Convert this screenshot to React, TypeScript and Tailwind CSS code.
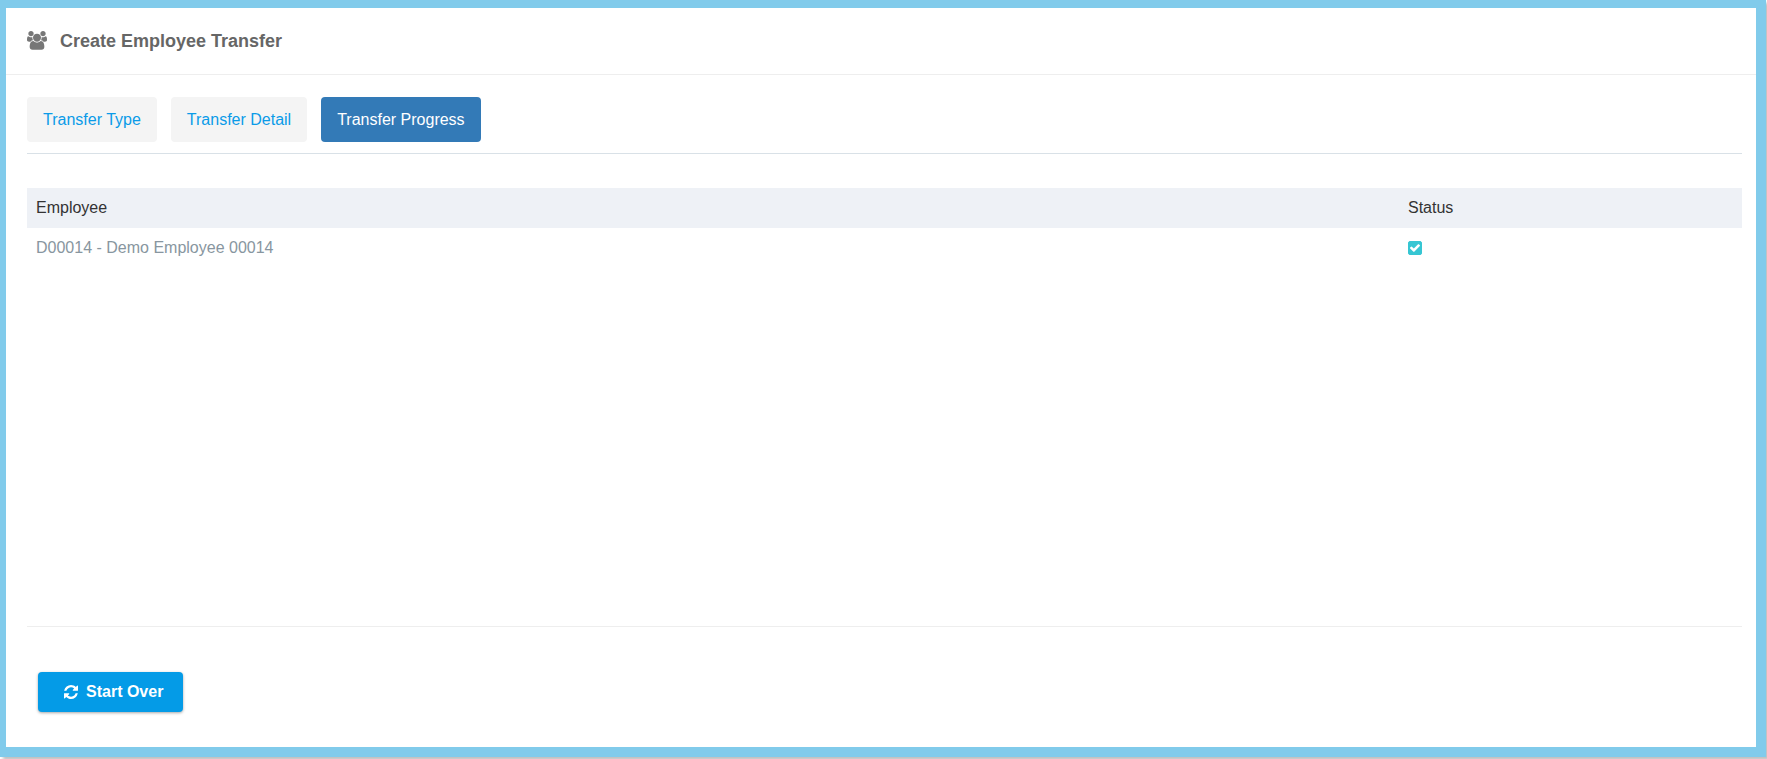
import { useState } from "react";
import clsx from "clsx";

interface Employee {
  id: string;
  name: string;
  done: boolean;
}

const steps = ["Transfer Type", "Transfer Detail", "Transfer Progress"];

const employees: Employee[] = [
  { id: "D00014", name: "Demo Employee 00014", done: true },
];

const UsersIcon = () => (
  <svg viewBox="0 0 1920 1920" className="w-5 h-5 fill-[#777777]" aria-hidden="true">
    <path d="M593 896q-162 5-265 128h-134q-82 0-138-40.5t-56-118.5q0-353 124-353 6 0 43.5 21t97.5 42.5 119 21.5q67 0 133-23-5 37-5 66 0 139 81 256zm1071 637q0 120-73 189.5t-194 69.5h-874q-121 0-194-69.5t-73-189.5q0-53 3.5-103.5t14-109 26.5-108.5 43-97.5 62-81 85.5-53.5 111.5-20q10 0 43 21.5t73 48 107 48 135 21.5 135-21.5 107-48 73-48 43-21.5q61 0 111.5 20t85.5 53.5 62 81 43 97.5 26.5 108.5 14 109 3.5 103.5zm-1024-1277q0 106-75 181t-181 75-181-75-75-181 75-181 181-75 181 75 75 181zm704 384q0 159-112.5 271.5t-271.5 112.5-271.5-112.5-112.5-271.5 112.5-271.5 271.5-112.5 271.5 112.5 112.5 271.5zm576 225q0 78-56 118.5t-138 40.5h-134q-103-123-265-128 81-117 81-256 0-29-5-66 66 23 133 23 59 0 119-21.5t97.5-42.5 43.5-21q124 0 124 353zm-128-609q0 106-75 181t-181 75-181-75-75-181 75-181 181-75 181 75 75 181z" />
  </svg>
);

const RefreshIcon = () => (
  <svg viewBox="128 128 1536 1536" className="w-[14px] h-[14px] fill-current" aria-hidden="true">
    <path d="M1639 1056q0 5-1 7-64 268-268 434.5t-478 166.5q-146 0-282.5-55t-243.5-157l-129 129q-19 19-45 19t-45-19-19-45v-448q0-26 19-45t45-19h448q26 0 45 19t19 45-19 45l-137 137q71 66 161 102t187 36q134 0 250-65t186-179q11-17 53-117 8-23 30-23h192q13 0 22.5 9.5t9.5 22.5zm25-800v448q0 26-19 45t-45 19h-448q-26 0-45-19t-19-45 19-45l138-138q-148-137-349-137-134 0-250 65t-186 179q-11 17-53 117-8 23-30 23h-199q-13 0-22.5-9.5t-9.5-22.5v-7q65-268 270-434.5t480-166.5q146 0 284 55.5t245 156.5l130-129q19-19 45-19t45 19 19 45z" />
  </svg>
);

const StatusCheck = ({ label, checked }: { label: string; checked: boolean }) => (
  <span className="grid w-[14px] h-[14px]">
    <input
      type="checkbox"
      aria-label={label}
      checked={checked}
      readOnly
      className="peer col-start-1 row-start-1 appearance-none w-[14px] h-[14px] rounded-[2px] border border-[#36c6d3] checked:bg-[#36c6d3]"
    />
    <svg
      viewBox="128 128 1536 1536"
      className="col-start-1 row-start-1 w-[14px] h-[14px] fill-white pointer-events-none invisible peer-checked:visible"
      aria-hidden="true"
    >
      <path d="M813 1299l614-614q19-19 19-45t-19-45l-102-102q-19-19-45-19t-45 19l-467 467-211-211q-19-19-45-19t-45 19l-102 102q-19 19-19 45t19 45l358 358q19 19 45 19t45-19z" />
    </svg>
  </span>
);

export default function App() {
  const [active, setActive] = useState(2);

  return (
    <div className="bg-white pr-px pb-[2px] font-['Liberation_Sans',Arial,sans-serif] text-base">
      <main className="bg-white border-[#81cbeb] border-t-8 border-r-10 border-b-10 border-l-6 shadow-[3px_3px_3px_rgba(0,0,0,0.25)]">
        <header className="flex items-center gap-[13px] px-[21px] h-[67px] border-b border-[#eeeeee] text-[#666666]">
          <UsersIcon />
          <h1 className="text-lg font-bold">Create Employee Transfer</h1>
        </header>

        <div className="pl-[21px] pr-[14px] pt-[22px] pb-[35px]">
          <nav className="flex gap-[14px] pb-[11px] border-b border-[#d9e1e7]">
            {steps.map((step, i) => (
              <a
                key={step}
                href="#"
                onClick={(e) => {
                  e.preventDefault();
                  setActive(i);
                }}
                className={clsx(
                  "px-4 h-[45px] leading-[45px] rounded",
                  i === active ? "bg-[#337ab7] text-white" : "bg-[#f4f4f4] text-[#0a9be8]"
                )}
              >
                {step}
              </a>
            ))}
          </nav>

          <div className="mt-[34px] min-h-[438px]">
            <table className="w-full table-fixed text-left">
              <thead>
                <tr className="h-10 bg-[#eef1f6] text-[#333333]">
                  <th className="w-4/5 px-[9px] font-normal">Employee</th>
                  <th className="px-[9px] font-normal">Status</th>
                </tr>
              </thead>
              <tbody>
                {employees.map(({ id, name, done }) => (
                  <tr key={id} className="h-10 text-[#8896a0]">
                    <td className="px-[9px]">
                      {id} - {name}
                    </td>
                    <td className="px-[9px]">
                      <StatusCheck label={`${name} transferred`} checked={done} />
                    </td>
                  </tr>
                ))}
              </tbody>
            </table>
          </div>

          <footer className="border-t border-[#eeeeee] px-[11px] pt-[45px]">
            <button
              type="button"
              onClick={() => setActive(0)}
              className="flex items-center gap-2 h-10 pl-[26px] pr-5 rounded bg-[#049be7] text-white font-bold shadow-[0_1px_3px_rgba(0,0,0,0.35)]"
            >
              <RefreshIcon />
              Start Over
            </button>
          </footer>
        </div>
      </main>
    </div>
  );
}
